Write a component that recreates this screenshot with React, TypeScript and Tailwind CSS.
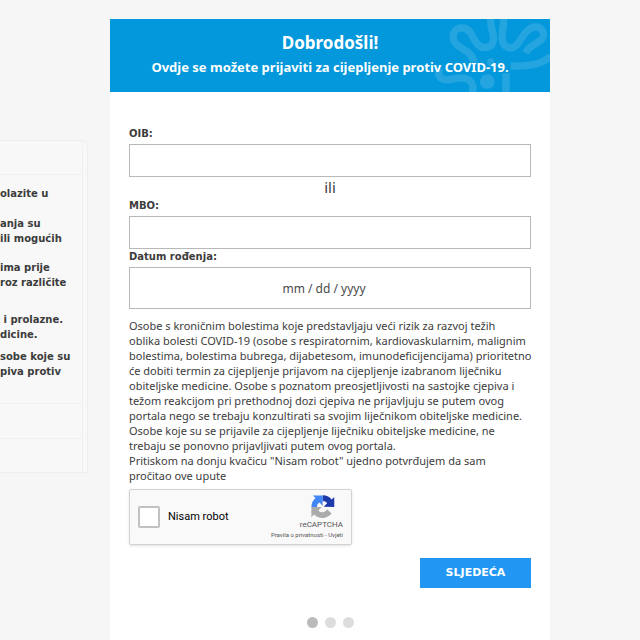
import type { ReactNode } from 'react';

const notes = [
  { lines: ['olazite u'], gap: 'mt-[11px]' },
  { lines: ['anja su', 'ili mogućih'], gap: 'mt-[15px]' },
  { lines: ['ima prije', 'roz različite'], gap: 'mt-3.5' },
  { lines: [' i prolazne.', 'dicine.'], gap: 'mt-[22px]' },
  { lines: ['sobe koje su', 'piva protiv'], gap: 'mt-[7px]' },
];

const instructions = [
  'Osobe s kroničnim bolestima koje predstavljaju veći rizik za razvoj težih',
  'oblika bolesti COVID-19 (osobe s respiratornim, kardiovaskularnim, malignim',
  'bolestima, bolestima bubrega, dijabetesom, imunodeficijencijama) prioritetno',
  'će dobiti termin za cijepljenje prijavom na cijepljenje izabranom liječniku',
  'obiteljske medicine. Osobe s poznatom preosjetljivosti na sastojke cjepiva i',
  'težom reakcijom pri prethodnoj dozi cjepiva ne prijavljuju se putem ovog',
  'portala nego se trebaju konzultirati sa svojim liječnikom obiteljske medicine.',
  'Osobe koje su se prijavile za cijepljenje liječniku obiteljske medicine, ne',
  'trebaju se ponovno prijavljivati putem ovog portala.',
  'Pritiskom na donju kvačicu "Nisam robot" ujedno potvrđujem da sam',
  'pročitao ove upute',
];

function SidePanel() {
  return (
    <aside className="w-[110px] shrink-0 pt-[140px]">
      <div className="mr-[22px] rounded-tr-md border-t border-r border-b border-[#eeeeee] bg-[#f8f8f8] pr-1">
        <div className="h-[34px] border-r border-b border-[#f0f0f0]" />
        <div className="h-[229px] overflow-hidden border-r border-b border-[#f0f0f0] text-[10px] leading-[15px] font-bold whitespace-pre text-[#3c3c3c]">
          {notes.map((note) => (
            <p key={note.lines[0]} className={note.gap}>
              {note.lines.map((line) => (
                <span key={line} className="block">
                  {line}
                </span>
              ))}
            </p>
          ))}
        </div>
        <div className="h-[35px] border-r border-b border-[#f0f0f0]" />
        <div className="h-[33px] border-r border-[#f0f0f0]" />
      </div>
    </aside>
  );
}

function Emblem() {
  return (
    <svg
      viewBox="30 27 360 219"
      className="absolute top-0 right-0 h-[73px] w-[120px]"
      fill="none"
      stroke="#25a5df"
      strokeWidth="22"
      aria-hidden="true"
    >
      <path d="M162 158C160 134 140 124 122 113C98 99 94 76 106 62C120 47 144 53 154 72C164 92 173 112 194 113C216 113 222 98 220 78C218 60 210 48 212 24" />
      <path d="M250 24C254 46 243 70 247 92C251 112 274 122 290 105C306 86 318 56 342 51C364 49 378 70 366 87C355 101 328 104 317 129" />
      <path d="M392 138C372 160 330 170 272 168" />
      <path d="M58 176C50 204 70 214 94 208C124 200 150 202 158 226C160 234 158 240 158 250" />
      <path d="M258 250V190" />
      <circle cx="202" cy="215" r="22" fill="#25a5df" stroke="none" />
      <circle cx="212" cy="156" r="11" fill="#25a5df" stroke="none" />
    </svg>
  );
}

function RecaptchaLogo() {
  return (
    <svg viewBox="0 0 64 64" className="size-6" aria-hidden="true">
      <path
        fill="#1c3aa9"
        d="M62 32V5l-7 7A31 31 0 0 0 31 1v15c6 0 9 2 12 6l-9 9z"
      />
      <path
        fill="#4285f4"
        d="M31 1H5l7 7A31 31 0 0 0 1 32h15c0-7 3-10 7-12l8 9z"
      />
      <path
        fill="#ababab"
        d="M1 32v27l7-7a31 31 0 0 0 47-3L43 38c-3 6-9 9-15 8-4-1-6-2-8-5l9-9z"
      />
    </svg>
  );
}

function Label({ htmlFor, children }: { htmlFor: string; children: ReactNode }) {
  return (
    <label htmlFor={htmlFor} className="block text-[10px] leading-4 font-bold">
      {children}
    </label>
  );
}

function Captcha() {
  return (
    <div className="mt-1.5 flex h-14 w-[223px] items-center rounded-xs border border-[#d3d3d3] bg-[#f9f9f9] pr-2 pl-2 font-[Roboto,sans-serif] text-black shadow-sm">
      <input
        id="robot"
        type="checkbox"
        className="size-[22px] appearance-none rounded-xs border-2 border-[#c1c1c1] bg-white"
      />
      <label htmlFor="robot" className="ml-2 text-[11px]">
        Nisam robot
      </label>
      <div className="ml-auto flex flex-col items-end text-[#555555]">
        <div className="mr-2">
          <RecaptchaLogo />
        </div>
        <div className="text-[8px] leading-[11px]">reCAPTCHA</div>
        <div className="text-[6px] leading-[9px] whitespace-nowrap">
          <a href="#privatnost">Pravila o privatnosti</a> - <a href="#uvjeti">Uvjeti</a>
        </div>
      </div>
    </div>
  );
}

export default function App() {
  return (
    <div className="flex min-h-screen overflow-hidden bg-[#f6f6f6] font-['DejaVu_Sans',Verdana,sans-serif] text-[#3c3c3c]">
      <SidePanel />
      <main className="mt-[19px] mr-[90px] min-w-0 flex-1 bg-white">
        <header className="relative h-[73px] bg-[#0398db] pt-3 text-center font-['Noto_Sans',sans-serif] font-bold text-white">
          <Emblem />
          <div className="relative">
            <h1 className="text-[17px] leading-6">Dobrodošli!</h1>
            <p className="text-[13px] leading-6 whitespace-nowrap">
              Ovdje se možete prijaviti za cijepljenje protiv COVID-19.
            </p>
          </div>
        </header>

        <form className="px-[19px] pt-[34px]">
          <Label htmlFor="oib">OIB:</Label>
          <input
            id="oib"
            type="text"
            className="mt-0.5 block h-[33px] w-full border border-[#b8b8b8] px-3 text-xs"
          />
          <p className="text-center font-['Noto_Sans',sans-serif] text-[15px] leading-5">ili</p>
          <div className="mt-px">
            <Label htmlFor="mbo">MBO:</Label>
          </div>
          <input
            id="mbo"
            type="text"
            className="mt-0.5 block h-[33px] w-full border border-[#b8b8b8] px-3 text-xs"
          />
          <Label htmlFor="datum">Datum rođenja:</Label>
          <input
            id="datum"
            type="text"
            placeholder="mm / dd / yyyy"
            className="mt-0.5 block h-[42px] w-full border border-[#b8b8b8] pr-6 pl-3 text-center font-['Noto_Sans',sans-serif] text-xs placeholder:text-[#4a4a4a]"
          />

          <div className="mt-[9px] font-['Noto_Sans',sans-serif] text-[11px] leading-[15px] whitespace-nowrap">
            {instructions.map((line) => (
              <span key={line} className="block">
                {line}
              </span>
            ))}
          </div>

          <Captcha />

          <div className="mt-[13px] flex justify-end">
            <button
              type="button"
              className="h-[30px] w-[111px] bg-[#2196f3] text-[11px] font-bold text-white"
            >
              SLJEDEĆA
            </button>
          </div>
        </form>

        <div className="mt-[29px] flex justify-center gap-[7px]">
          <span className="size-[11px] rounded-full bg-[#bbbbbb]" />
          <span className="size-[11px] rounded-full bg-[#dddddd]" />
          <span className="size-[11px] rounded-full bg-[#dddddd]" />
        </div>
      </main>
    </div>
  );
}
